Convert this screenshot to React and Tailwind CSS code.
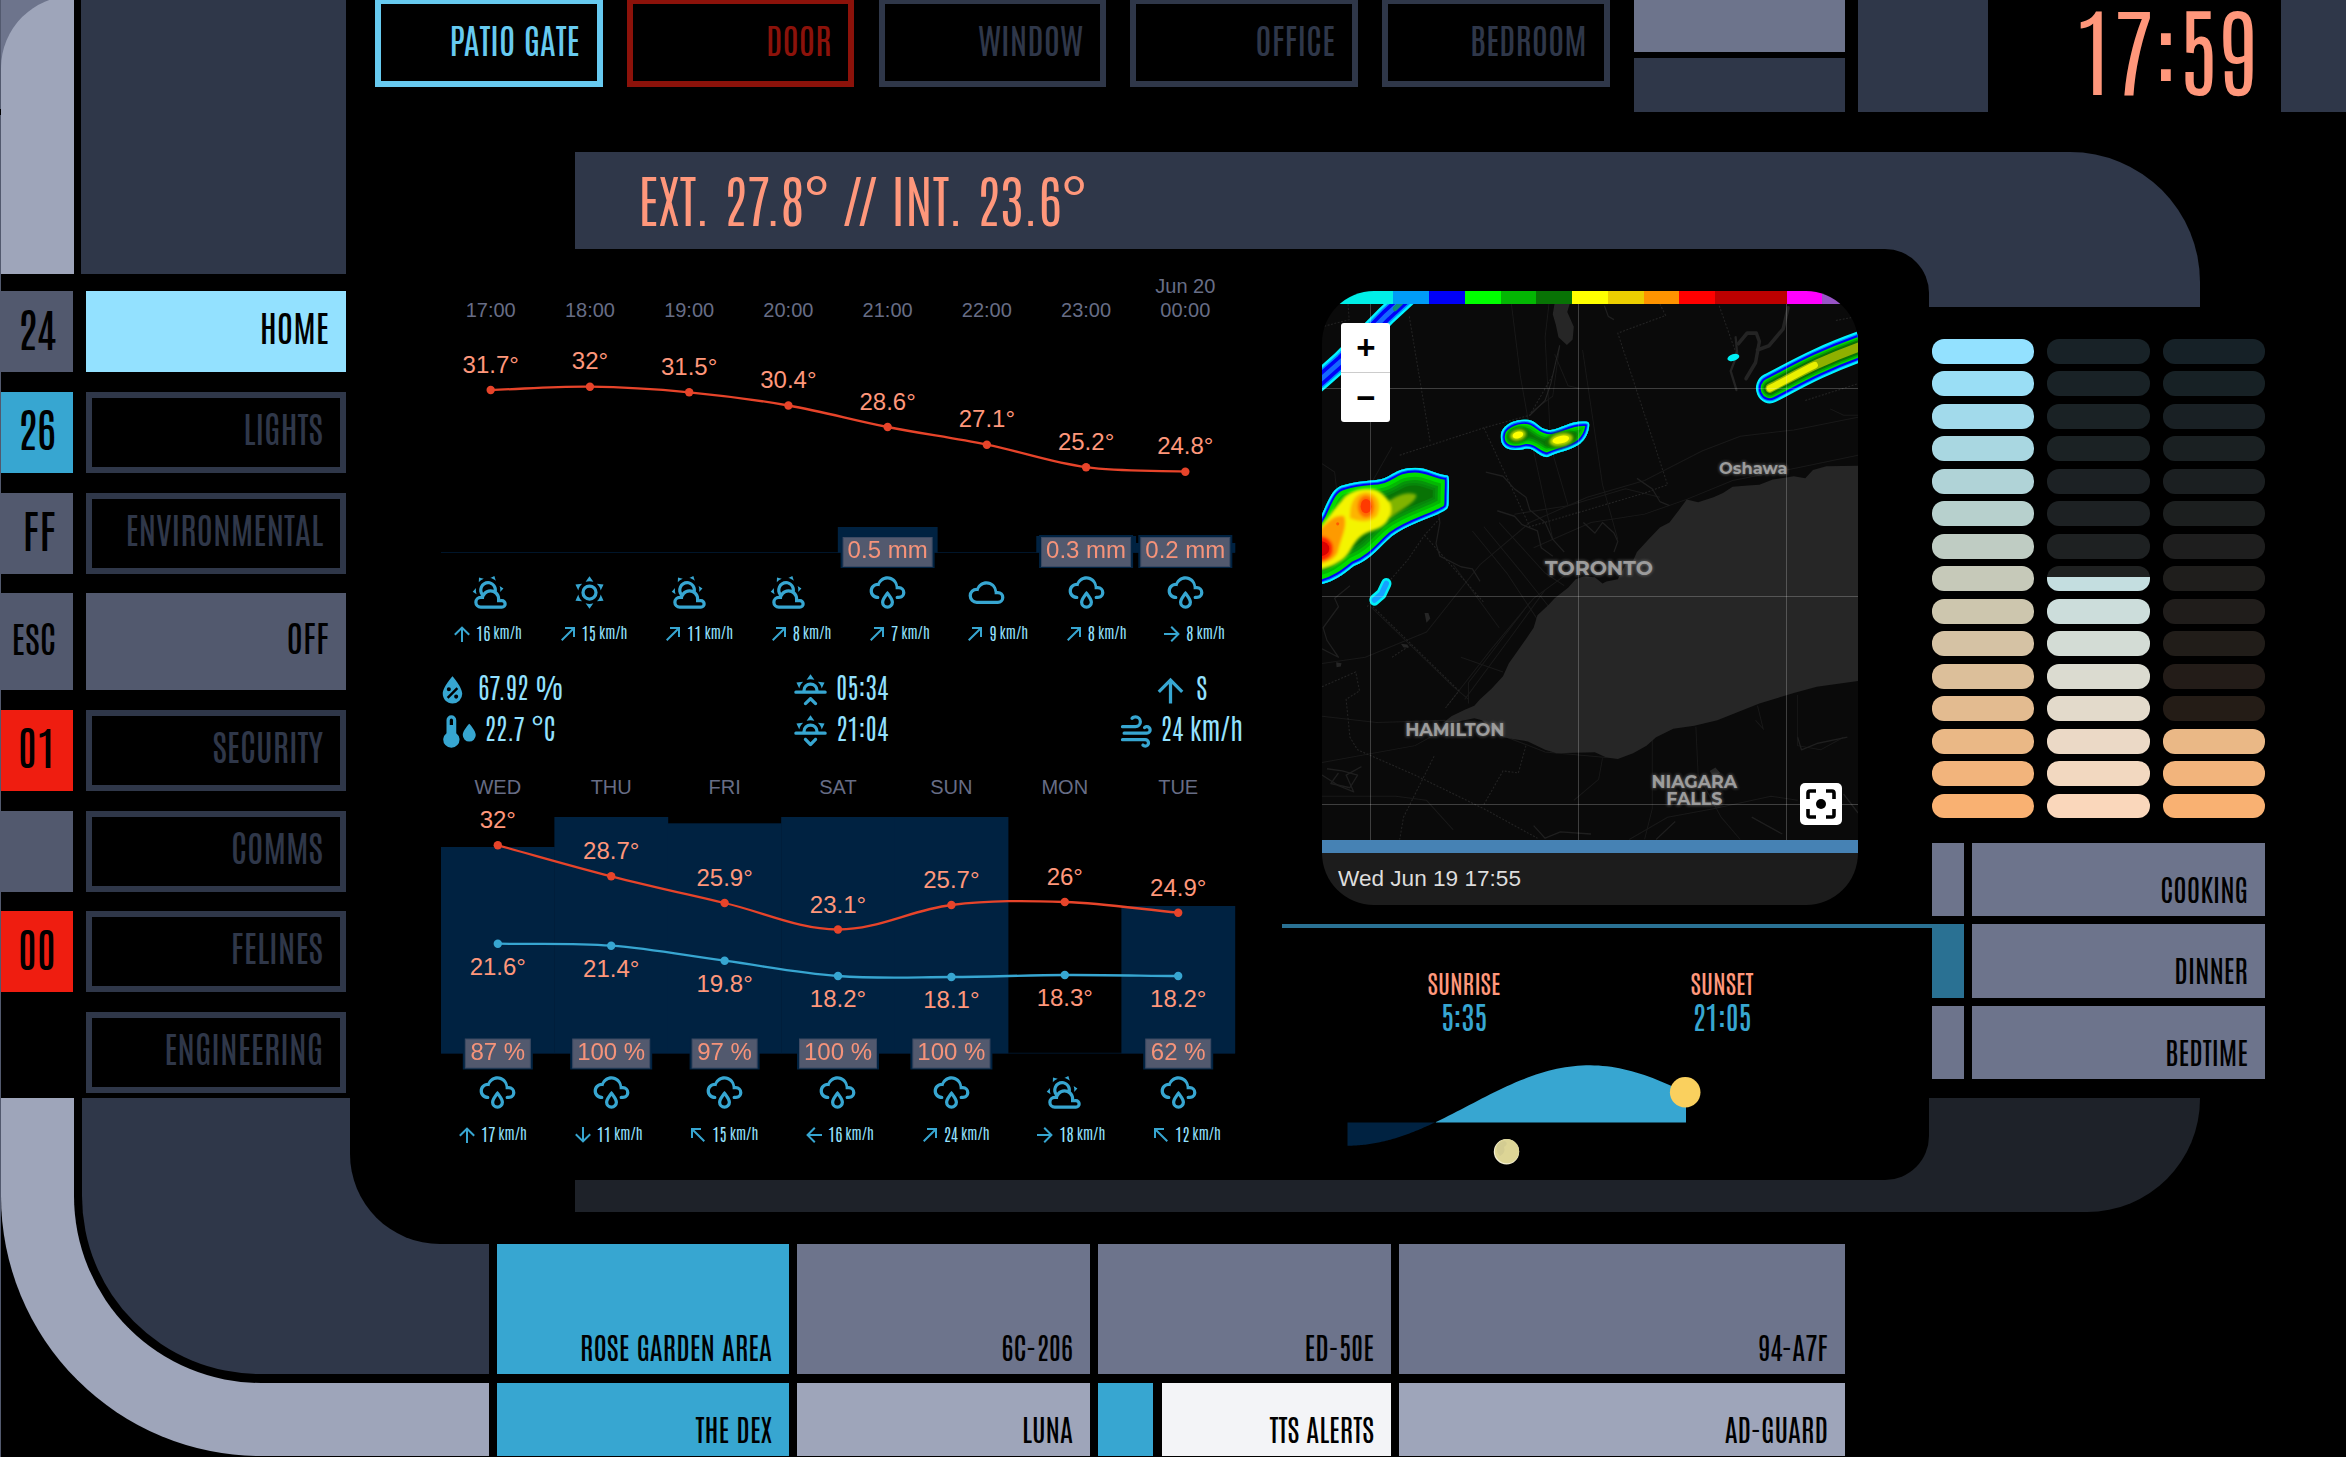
const LCARS = "font-[Antonio,'Roboto_Condensed',sans-serif]";
const CHART_FONT = "'Liberation Sans', Arial, sans-serif";

const ICONS = {
  partly:
    "M12.74,5.47C15.1,6.5 16.35,9.03 15.92,11.46C17.19,12.56 18,14.19 18,16V16.17C18.31,16.06 18.65,16 19,16A3,3 0 0,1 22,19A3,3 0 0,1 19,22H6A4,4 0 0,1 2,18A4,4 0 0,1 6,14H6.27C5,12.45 4.6,10.24 5.5,8.26C6.72,5.5 9.97,4.24 12.74,5.47M11.93,7.3C10.16,6.5 8.09,7.31 7.31,9.07C6.85,10.09 6.93,11.22 7.41,12.13C8.5,10.83 10.16,10 12,10C12.7,10 13.38,10.12 14,10.34C13.94,9.06 13.18,7.86 11.93,7.3M13.55,3.64C13,3.4 12.45,3.23 11.88,3.12L14.37,1.82L15.27,4.71C14.76,4.29 14.19,3.93 13.55,3.64M6.09,4.44C5.6,4.79 5.17,5.19 4.8,5.63L4.91,2.82L7.87,3.5C7.25,3.71 6.65,4.03 6.09,4.44M18,9.71C17.91,9.12 17.78,8.55 17.59,8L19.97,9.5L17.92,11.73C18.03,11.08 18.05,10.4 18,9.71M3.04,11.3C3.11,11.9 3.24,12.47 3.43,13L1.06,11.5L3.1,9.28C3,9.93 2.97,10.61 3.04,11.3M19,18H16V16A4,4 0 0,0 12,12A4,4 0 0,0 8,16H6A2,2 0 0,0 4,18A2,2 0 0,0 6,20H19A1,1 0 0,0 20,19A1,1 0 0,0 19,18Z",
  sunny:
    "M12,7A5,5 0 0,1 17,12A5,5 0 0,1 12,17A5,5 0 0,1 7,12A5,5 0 0,1 12,7M12,9A3,3 0 0,0 9,12A3,3 0 0,0 12,15A3,3 0 0,0 15,12A3,3 0 0,0 12,9M12,2L14.39,5.42C13.65,5.15 12.84,5 12,5C11.16,5 10.35,5.15 9.61,5.42L12,2M3.34,7L7.5,6.65C6.9,7.16 6.36,7.78 5.94,8.5C5.5,9.24 5.25,10 5.11,10.79L3.34,7M3.36,17L5.12,13.23C5.26,14 5.53,14.78 5.95,15.5C6.37,16.24 6.91,16.86 7.5,17.37L3.36,17M20.65,7L18.88,10.79C18.74,10 18.47,9.23 18.05,8.5C17.63,7.78 17.1,7.15 16.5,6.64L20.65,7M20.64,17L16.5,17.36C17.09,16.85 17.62,16.22 18.04,15.5C18.46,14.77 18.73,14 18.87,13.21L20.64,17M12,22L9.59,18.56C10.33,18.83 11.14,19 12,19C12.82,19 13.63,18.83 14.37,18.56L12,22Z",
  rainy:
    "M6,14.03A1,1 0 0,1 7,15.03C7,15.58 6.55,16.03 6,16.03C3.24,16.03 1,13.79 1,11.03C1,8.27 3.24,6.03 6,6.03C7,3.68 9.3,2.03 12,2.03C15.43,2.03 18.24,4.69 18.5,8.06L19,8.03A4,4 0 0,1 23,12.03C23,14.23 21.21,16.03 19,16.03H18C17.45,16.03 17,15.58 17,15.03C17,14.47 17.45,14.03 18,14.03H19A2,2 0 0,0 21,12.03A2,2 0 0,0 19,10.03H17V9.03C17,6.27 14.76,4.03 12,4.03C9.5,4.03 7.45,5.84 7.06,8.21C6.73,8.09 6.37,8.03 6,8.03A3,3 0 0,0 3,11.03A3,3 0 0,0 6,14.03M12,14.15C12.18,14.39 12.37,14.66 12.56,14.94C13,15.56 14,17.03 14,18C14,19.11 13.1,20 12,20A2,2 0 0,1 10,18C10,17.03 11,15.56 11.44,14.94C11.63,14.66 11.82,14.4 12,14.15M12,11.03L11.5,11.59C11.5,11.59 10.65,12.55 9.79,13.81C8.93,15.06 8,16.56 8,18A4,4 0 0,0 12,22A4,4 0 0,0 16,18C16,16.56 15.07,15.06 14.21,13.81C13.35,12.55 12.5,11.59 12.5,11.59",
  cloudy:
    "M6,19A5,5 0 0,1 1,14A5,5 0 0,1 6,9C7,6.65 9.3,5 12,5C15.43,5 18.24,7.66 18.5,11.03L19,11A4,4 0 0,1 23,15A4,4 0 0,1 19,19H6M19,13H17V12A5,5 0 0,0 12,7C9.5,7 7.45,8.82 7.06,11.19C6.73,11.07 6.37,11 6,11A3,3 0 0,0 3,14A3,3 0 0,0 6,17H19A2,2 0 0,0 21,15A2,2 0 0,0 19,13Z",
  humidity:
    "M12,3.25C12,3.25 6,10 6,14C6,17.32 8.69,20 12,20A6,6 0 0,0 18,14C18,10 12,3.25 12,3.25M14.47,9.97L15.53,11.03L9.53,17.03L8.47,15.97M9.75,10A1.25,1.25 0 0,1 11,11.25A1.25,1.25 0 0,1 9.75,12.5A1.25,1.25 0 0,1 8.5,11.25A1.25,1.25 0 0,1 9.75,10M14.25,14.5A1.25,1.25 0 0,1 15.5,15.75A1.25,1.25 0 0,1 14.25,17A1.25,1.25 0 0,1 13,15.75A1.25,1.25 0 0,1 14.25,14.5Z",
  dew:
    "M10,13V5A3,3 0 0,0 4,5V13A5,5 0 1,0 10,13M6,5A1,1 0 0,1 8,5V8H6V5M18,7.2C18,7.2 14,11.3 14,14.2A4,4 0 0,0 22,14.2C22,11.3 18,7.2 18,7.2Z",
  sunrise:
    "M3,12H7A5,5 0 0,1 12,7A5,5 0 0,1 17,12H21A1,1 0 0,1 22,13A1,1 0 0,1 21,14H3A1,1 0 0,1 2,13A1,1 0 0,1 3,12M15,12A3,3 0 0,0 12,9A3,3 0 0,0 9,12H15M12,2L14.39,5.42C13.65,5.15 12.84,5 12,5C11.16,5 10.35,5.15 9.61,5.42L12,2M3.34,7L7.5,6.65C6.9,7.16 6.36,7.78 5.94,8.5C5.5,9.24 5.25,10 5.11,10.79L3.34,7M20.65,7L18.88,10.79C18.74,10 18.47,9.23 18.05,8.5C17.63,7.78 17.1,7.15 16.5,6.64L20.65,7M12.71,16.3L15.82,19.41C16.21,19.8 16.21,20.43 15.82,20.82C15.43,21.21 14.8,21.21 14.41,20.82L12,18.41L9.59,20.82C9.2,21.21 8.57,21.21 8.18,20.82C7.79,20.43 7.79,19.8 8.18,19.41L11.29,16.3C11.5,16.1 11.74,16 12,16C12.26,16 12.5,16.1 12.71,16.3Z",
  sunset:
    "M3,12H7A5,5 0 0,1 12,7A5,5 0 0,1 17,12H21A1,1 0 0,1 22,13A1,1 0 0,1 21,14H3A1,1 0 0,1 2,13A1,1 0 0,1 3,12M15,12A3,3 0 0,0 12,9A3,3 0 0,0 9,12H15M12,2L14.39,5.42C13.65,5.15 12.84,5 12,5C11.16,5 10.35,5.15 9.61,5.42L12,2M3.34,7L7.5,6.65C6.9,7.16 6.36,7.78 5.94,8.5C5.5,9.24 5.25,10 5.11,10.79L3.34,7M20.65,7L18.88,10.79C18.74,10 18.47,9.23 18.05,8.5C17.63,7.78 17.1,7.15 16.5,6.64L20.65,7M12.71,20.71L15.82,17.6C16.21,17.21 16.21,16.57 15.82,16.18C15.43,15.79 14.8,15.79 14.41,16.18L12,18.59L9.59,16.18C9.2,15.79 8.57,15.79 8.18,16.18C7.79,16.57 7.79,17.21 8.18,17.6L11.29,20.71C11.5,20.9 11.74,21 12,21C12.26,21 12.5,20.9 12.71,20.71Z",
  windy:
    "M4,10A1,1 0 0,1 3,9A1,1 0 0,1 4,8H12A2,2 0 0,0 14,6A2,2 0 0,0 12,4C11.45,4 10.95,4.22 10.59,4.59C10.2,5 9.56,5 9.17,4.59C8.78,4.2 8.78,3.56 9.17,3.17C9.9,2.45 10.9,2 12,2A4,4 0 0,1 16,6A4,4 0 0,1 12,10H4M19,12A1,1 0 0,0 20,11A1,1 0 0,0 19,10C18.72,10 18.47,10.11 18.29,10.29C17.9,10.68 17.27,10.68 16.88,10.29C16.5,9.9 16.5,9.27 16.88,8.88C17.42,8.34 18.17,8 19,8A3,3 0 0,1 22,11A3,3 0 0,1 19,14H5A1,1 0 0,1 4,13A1,1 0 0,1 5,12H19M18,18H4A1,1 0 0,1 3,17A1,1 0 0,1 4,16H18A3,3 0 0,1 21,19A3,3 0 0,1 18,22C17.17,22 16.42,21.66 15.88,21.12C15.5,20.73 15.5,20.1 15.88,19.71C16.27,19.32 16.9,19.32 17.29,19.71C17.47,19.89 17.72,20 18,20A1,1 0 0,0 19,19A1,1 0 0,0 18,18Z",
  n: "M13,20H11V8L5.5,13.5L4.08,12.08L12,4.16L19.92,12.08L18.5,13.5L13,8V20Z",
  s: "M11,4H13V16L18.5,10.5L19.92,11.92L12,19.84L4.08,11.92L5.5,10.5L11,16V4Z",
  e: "M4,11V13H16L10.5,18.5L11.92,19.92L19.84,12L11.92,4.08L10.5,5.5L16,11H4Z",
  w: "M20,11V13H8L13.5,18.5L12.08,19.92L4.16,12L12.08,4.08L13.5,5.5L8,11H20Z",
  ne: "M5,17.59L15.59,7H9V5H19V15H17V8.41L6.41,19L5,17.59Z",
  nw: "M19,17.59L17.59,19L7,8.41V15H5V5H15V7H8.41L19,17.59Z",
};

function Icon({ name, className }) {
  return (
    <svg viewBox="0 0 24 24" className={`shrink-0 fill-[#37a6d1] ${className}`}>
      <path d={ICONS[name]} fillRule={name === "dew" || name === "humidity" ? "evenodd" : "nonzero"} />
    </svg>
  );
}

/* ---------- navigation ---------- */

const NAV = [
  { code: "24", codeCls: "bg-[#52596e]", label: "HOME", cls: "bg-[#93e1ff] text-black pr-[17px]" },
  { code: "26", codeCls: "bg-[#37a6d1]", label: "LIGHTS" },
  { code: "FF", codeCls: "bg-[#52596e]", label: "ENVIRONMENTAL" },
  { code: "ESC", small: true, tall: true, codeCls: "bg-[#52596e]", label: "OFF", cls: "bg-[#52596e] text-black pr-[17px]" },
  { code: "01", codeCls: "bg-[#ef1d10]", label: "SECURITY" },
  { code: "", codeCls: "bg-[#52596e]", label: "COMMS" },
  { code: "00", codeCls: "bg-[#ef1d10]", label: "FELINES" },
  { code: "", codeCls: "", label: "ENGINEERING" },
];

function Sidebar() {
  return (
    <nav className="col-start-2 row-start-1 flex flex-col">
      <div className="flex h-[274px] gap-[7px] overflow-hidden">
        <div className="w-[73px] bg-[#6d748c]">
          <div className="-mt-1 h-[278px] rounded-tl-[72px] bg-[#9ea5ba]" />
        </div>
        <div className="flex-1 bg-[#2f3749]" />
      </div>
      <div className="mt-[17.2px] flex flex-col gap-[19.6px]">
        {NAV.map((n) => (
          <div key={n.label} className={`flex gap-[13px] ${n.tall ? "h-[97px]" : "h-[81.1px]"}`}>
            <div
              className={`flex w-[72px] items-center justify-end pr-[17px] pb-2.5 text-black ${n.small ? "text-[36.5px]" : "text-[46px]"} leading-none ${n.codeCls}`}
            >
              {n.code}
            </div>
            <div
              className={`flex flex-1 items-center justify-end pb-[9px] text-[35.7px] leading-none ${n.cls || "border-[6px] border-[#2f3749] pr-[17px] text-[#2f3749]"}`}
            >
              {n.label}
            </div>
          </div>
        ))}
      </div>
    </nav>
  );
}

function LeftElbow() {
  return (
    <div className="col-span-2 col-start-2 row-span-2 row-start-2 h-[358px] overflow-hidden rounded-bl-[260px] border-b-[73px] border-l-[73px] border-[#9ea5ba]">
      <div className="ml-2 flex h-[276px] w-[407px] justify-end rounded-bl-[178px] bg-[#2f3749]">
        <div className="h-[146px] w-[139px] rounded-bl-[90px] bg-black" />
      </div>
    </div>
  );
}

/* ---------- top bar ---------- */

const SENSORS = [
  ["PATIO GATE", "border-[#67caf0] text-[#67caf0]"],
  ["DOOR", "border-[#8c120a] text-[#8c120a]"],
  ["WINDOW", "border-[#2f3749] text-[#2f3749]"],
  ["OFFICE", "border-[#2f3749] text-[#2f3749]"],
  ["BEDROOM", "border-[#2f3749] text-[#2f3749]"],
];

function TopBar() {
  return (
    <header className="flex h-[112px] pl-[29px]">
      <div className="-mt-0.5 flex gap-[24.2px]">
        {SENSORS.map(([name, cls]) => (
          <div
            key={name}
            className={`flex h-[89px] w-[227.6px] items-center justify-end border-[6px] pr-[17px] pb-[7px] text-[35.4px] leading-none ${cls}`}
          >
            {name}
          </div>
        ))}
      </div>
      <div className="ml-6 flex w-[211px] flex-col gap-1.5">
        <div className="h-[52px] bg-[#6d748c]" />
        <div className="h-[54px] bg-[#2f3749]" />
      </div>
      <div className="ml-[13px] w-[130px] bg-[#2f3749]" />
      <div className="flex flex-1 items-center justify-end pr-[23px] pb-[19px] text-[96.8px] leading-none font-light text-[#ff977b]">
        17:59
      </div>
      <div className="w-[65px] bg-[#2f3749]" />
    </header>
  );
}

/* ---------- weather charts ---------- */

function spline(pts, t = 0.35) {
  const cps = pts.map((p, i) => {
    const a = pts[Math.max(i - 1, 0)];
    const b = pts[Math.min(i + 1, pts.length - 1)];
    const d1 = Math.hypot(p[0] - a[0], p[1] - a[1]);
    const d2 = Math.hypot(b[0] - p[0], b[1] - p[1]);
    const s = d1 + d2 || 1;
    const fa = (t * d1) / s;
    const fb = (t * d2) / s;
    const dx = b[0] - a[0];
    const dy = b[1] - a[1];
    return [[p[0] - fa * dx, p[1] - fa * dy], [p[0] + fb * dx, p[1] + fb * dy]];
  });
  let d = `M${pts[0]}`;
  for (let i = 1; i < pts.length; i++) d += `C${cps[i - 1][1]} ${cps[i][0]} ${pts[i]}`;
  return d;
}

function Series({ pts, color }) {
  return (
    <g>
      <path d={spline(pts)} fill="none" stroke={color} strokeWidth="2.3" />
      {pts.map(([x, y]) => (
        <circle key={x} cx={x} cy={y} r="4.2" fill={color} />
      ))}
    </g>
  );
}

function RainTag({ x, y, w, children }) {
  return (
    <g>
      <rect x={x - w / 2} y={y} width={w} height="33" fill="#002241" />
      <rect x={x - w / 2 + 2.5} y={y + 2.5} width={w - 5} height="29" fill="#52596e" stroke="#3d4a63" />
      <text x={x} y={y + 23} textAnchor="middle" fontSize="24" fill="#ff977b" opacity="0.95">
        {children}
      </text>
    </g>
  );
}

const HOURS = [
  ["17:00", "31.7°", 390, "partly", "n", 16],
  ["18:00", "32°", 386.7, "sunny", "ne", 15],
  ["19:00", "31.5°", 392.3, "partly", "ne", 11],
  ["20:00", "30.4°", 405.5, "partly", "ne", 8],
  ["21:00", "28.6°", 427, "rainy", "ne", 7, "0.5 mm", 527],
  ["22:00", "27.1°", 444.7, "cloudy", "ne", 9],
  ["23:00", "25.2°", 467.2, "rainy", "ne", 8, "0.3 mm", 536],
  ["00:00", "24.8°", 471.7, "rainy", "e", 8, "0.2 mm", 543],
];
const hx = (i) => 490.7 + i * 99.23;

function HourlyChart() {
  return (
    <svg viewBox="441 270 794 302" className="mt-[21px] block h-[302px] w-[794px] overflow-visible" fontFamily={CHART_FONT}>
      <rect x="441" y="552" width="794" height="1" fill="#00152a" />
      {HOURS.map((h, i) => h[7] && <rect key={i} x={hx(i) - 49.8} y={h[7]} width="99.8" height={552.7 - h[7]} fill="#002241" />)}
      <Series pts={HOURS.map((h, i) => [hx(i), h[2]])} color="#e7442a" />
      <text x={hx(7)} y="292.7" textAnchor="middle" fontSize="20" fill="#676d86">
        Jun 20
      </text>
      {HOURS.map((h, i) => (
        <g key={i} textAnchor="middle">
          <text x={hx(i)} y="317" fontSize="20" fill="#676d86">
            {h[0]}
          </text>
          <text x={hx(i)} y={h[2] - 17.3} fontSize="24" fill="#ff977b">
            {h[1]}
          </text>
          {h[6] && (
            <RainTag x={hx(i)} y={535} w={94}>
              {h[6]}
            </RainTag>
          )}
        </g>
      ))}
    </svg>
  );
}

const DAYS = [
  ["WED", "32°", 845.3, "21.6°", 943.7, "rainy", "n", 17, "87 %", 847],
  ["THU", "28.7°", 876.3, "21.4°", 945.7, "rainy", "s", 11, "100 %", 817],
  ["FRI", "25.9°", 903, "19.8°", 960.7, "rainy", "nw", 15, "97 %", 823.3],
  ["SAT", "23.1°", 929.5, "18.2°", 976, "rainy", "w", 16, "100 %", 817],
  ["SUN", "25.7°", 905, "18.1°", 977, "rainy", "ne", 24, "100 %", 817],
  ["MON", "26°", 902, "18.3°", 975, "partly", "e", 18],
  ["TUE", "24.9°", 912.7, "18.2°", 976, "rainy", "nw", 12, "62 %", 906],
];
const dx = (i) => 497.8 + i * 113.4;

function DailyChart() {
  return (
    <svg viewBox="441 770 794 302" className="block h-[302px] w-[794px] overflow-visible" fontFamily={CHART_FONT}>
      <rect x="441" y="1052.7" width="794" height="1" fill="#00152a" />
      {DAYS.map((d, i) => d[9] && <rect key={i} x={dx(i) - 56.8} y={d[9]} width="113.8" height={1053.4 - d[9]} fill="#002241" />)}
      <Series pts={DAYS.map((d, i) => [dx(i), d[4]])} color="#37a6d1" />
      <Series pts={DAYS.map((d, i) => [dx(i), d[2]])} color="#e7442a" />
      {DAYS.map((d, i) => (
        <g key={i} textAnchor="middle">
          <text x={dx(i)} y="794" fontSize="20" fill="#676d86">
            {d[0]}
          </text>
          <text x={dx(i)} y={d[2] - 17} fontSize="24" fill="#ff977b">
            {d[1]}
          </text>
          <text x={dx(i)} y={d[4] + 31.2} fontSize="24" fill="#ff977b">
            {d[3]}
          </text>
          {d[8] && (
            <RainTag x={dx(i)} y={1036.5} w={d[8].length > 4 ? 82 : 70}>
              {d[8]}
            </RainTag>
          )}
        </g>
      ))}
    </svg>
  );
}

function IconRow({ names }) {
  return (
    <div className="mt-px flex h-[38px]">
      {names.map((n, i) => (
        <div key={i} className="flex flex-1 justify-center">
          <Icon name={n} className="size-[39px]" />
        </div>
      ))}
    </div>
  );
}

function WindRow({ items, className }) {
  return (
    <div className={`flex h-6 items-center justify-between ${className}`}>
      {items.map(([dir, speed], i) => (
        <div key={i} className="flex items-center text-[#93e1ff]">
          <Icon name={dir} className="size-6" />
          <span className="-mt-[2px] ml-0.5 text-[17.4px] leading-none font-light">{speed}</span>
          <span className="-mt-[3px] ml-[3px] text-[14.8px] leading-none font-light">km/h</span>
        </div>
      ))}
    </div>
  );
}

function Fact({ icon, children, className = "" }) {
  return (
    <div className={`flex h-[41px] items-center justify-center gap-1.5 text-[27.6px] leading-none font-light text-[#93e1ff] ${className}`}>
      <Icon name={icon} className="size-[39px]" />
      <span className="pb-[7px]">{children}</span>
    </div>
  );
}

function Weather() {
  return (
    <section className="ml-[95px] w-[794px] shrink-0">
      <HourlyChart />
      <IconRow names={HOURS.map((h) => h[3])} />
      <WindRow className="mt-[11px] mr-[10px] ml-[9px]" items={HOURS.map((h) => [h[4], h[5]])} />
      <div className="mt-6 -mr-2 -ml-2 flex justify-between">
        <div className="flex flex-col items-start">
          <Fact icon="humidity">67.92 %</Fact>
          <Fact icon="dew" className="ml-[6.5px]">22.7 °C</Fact>
        </div>
        <div>
          <Fact icon="sunrise">05:34</Fact>
          <Fact icon="sunset">21:04</Fact>
        </div>
        <div>
          <Fact icon="n">S</Fact>
          <Fact icon="windy">24 km/h</Fact>
        </div>
      </div>
      <div className="mt-[18px]">
        <DailyChart />
      </div>
      <IconRow names={DAYS.map((d) => d[5])} />
      <WindRow className="mt-3 mr-[14px] ml-[14px]" items={DAYS.map((d) => [d[6], d[7]])} />
    </section>
  );
}

/* ---------- radar map ---------- */

const SCALE = [
  "bg-[#00efe7]", "bg-[#00efe7]", "bg-[#009cf7]", "bg-[#0000f7]", "bg-[#00ff00]", "bg-[#03b703]", "bg-[#087305]",
  "bg-[#ffff00]", "bg-[#ecce00]", "bg-[#fe9300]", "bg-[#ff0000]", "bg-[#bd0000]", "bg-[#bd0000]", "bg-[#ff00fe]", "bg-[#9854c6]",
];

const LAKE =
  "M1470,465L1375,466L1340,475L1320,495L1290,490L1235,498L1200,510L1170,512L1130,515L1105,530L1080,540L1040,552L1010,545L990,570L965,600L940,612L910,640L880,670L870,690L850,700L830,735L800,740L790,745L770,730L740,728L720,735L700,755L665,780L650,795L620,820L610,850L580,890L545,935L530,965L500,995L470,1020L455,1035L430,1045L395,1060L375,1075L410,1073L455,1065L475,1070L500,1090L530,1110L560,1115L595,1120L640,1140L670,1148L770,1146L800,1158L830,1162L870,1148L905,1130L930,1110L975,1090L1030,1083L1090,1070L1200,1030L1290,1005L1350,990L1470,975Z";

const ROADS = [
  "M552,81L575,250L610,430L660,640", "M650,81L640,160L655,420L700,560", "M738,190L790,510L830,640", "M600,340L660,300L678,180",
  "M665,200L700,275L728,281", "M57,935L170,920L330,860L470,700L600,600L750,540L900,500L1050,430L1150,395L1290,380L1458,350",
  "M380,1040L500,900L610,780L700,720", "M430,1020L560,860L640,760", "M450,620L540,720L620,830", "M480,610L580,720L650,800",
  "M520,600L640,720L690,750", "M400,700L520,850", "M560,580L700,560L850,520L940,540", "M610,660L760,600L900,580L1010,545L1130,500L1300,470L1458,440",
  "M240,420L190,500L184,560", "M184,800L400,990L440,1020", "M57,1060L200,1075L380,1070", "M540,1110L640,1145L800,1158",
  "M57,1170L300,1130L380,1090", "M920,1110L920,1280L900,1353", "M1034,1085L1040,1200L1100,1300L1150,1353",
  "M860,1353L960,1300L1080,1280L1230,1250L1300,1260", "M1300,1010L1300,1130L1360,1140L1420,1110", "M1195,1035L1210,1090L1190,1070",
  "M790,1160L780,1210L715,1260", "M57,460L90,480L95,520", "M57,1250L250,1250L330,1260L400,1330", "M1385,330L1420,345L1458,345",
  "M420,920L530,955", "M440,1030L440,980L600,790",
];
const RIVERS = [
  "M485,480L530,490L560,520L590,540L600,570L640,600L660,640L690,670", "M515,572L560,585L580,605L620,620L630,660L660,680",
  "M360,570L365,600L355,650L365,680L420,705L450,710L470,740", "M880,495L920,520L940,550L965,560", "M740,600L770,625L790,600L820,625L830,645L820,670",
  "M57,900L100,920L70,880L60,850L100,800L90,780L130,750", "M70,1185L110,1190L150,1200L130,1230L80,1220L100,1195", "M57,1200L100,1225L140,1240L120,1200L160,1180",
  "M610,1320L640,1350L680,1335L760,1340", "M980,1310L930,1353", "M1180,1300L1220,1320L1260,1340", "M1300,1110L1310,1140L1350,1125L1430,1110",
  "M1420,1245L1458,1290", "M795,85L805,110L820,118",
];
const BORDERS = [
  "M125,81L128,118L57,135", "M285,110L340,410", "M260,440L480,375L600,345L660,250", "M480,375L600,610L900,530L960,510L830,150L955,108L940,81",
  "M1095,85L1140,200", "M365,590L325,630L280,690L175,800", "M325,630L480,790", "M190,800L415,1000L380,1040", "M57,990L145,955L155,1000L120,1020L130,1110L150,1140L300,1200L480,1280L620,1350",
  "M240,920L290,890", "M350,1155L270,1300L260,1353", "M480,1270L530,1190L570,1195L590,1130", "M1320,310L1458,270", "M1400,120L1458,110",
];

const RAIN_BIG =
  "M20,640L57,580C75,545 85,516 115,511C140,504 160,502 185,500C240,500 240,470 300,470C335,470 352,486 384,488C392,488 388,520 388,545C388,566 386,568 370,575C340,590 280,605 240,632C210,655 185,688 140,703C110,725 90,738 57,746L20,755Z";
const RAIN_MID =
  "M524,397C524,365 565,355 590,355C622,357 622,380 655,380C685,376 705,358 745,360C757,361 757,365 754,378C750,395 742,404 732,412C710,428 672,432 645,445C618,440 612,422 590,424C560,432 524,430 524,397Z";

/* Radar cell: concentric intensity bands running inward from the outline. */
function Cell({ id, d, bands, core, children }) {
  return (
    <g>
      <clipPath id={id}>
        <path d={d} />
      </clipPath>
      <g clipPath={`url(#${id})`}>
        <path d={d} fill={core} />
        {bands.map(([c, w], i) => (
          <path key={i} d={d} fill="none" stroke={c} strokeWidth={w} strokeLinejoin="round" />
        ))}
        {children}
      </g>
    </g>
  );
}

function Streak({ d, bands }) {
  return bands.map(([c, w], i) => (
    <path key={i} d={d} fill="none" stroke={c} strokeWidth={w} strokeLinecap="round" strokeLinejoin="round" />
  ));
}

const LABELS = [
  ["TORONTO", 277, 271, 20.4],
  ["Oshawa", 431.3, 169.7, 16.3],
  ["HAMILTON", 132.8, 432, 17.6],
  ["NIAGARA", 372.3, 483.7, 17.4],
  ["FALLS", 372.3, 501.4, 17.4],
];

function MapCanvas() {
  return (
    <svg viewBox="0 0 536 536" className="block h-[536px] w-[536px] bg-[#0a0a0a]">
      <defs>
        <filter id="soft" x="-30%" y="-30%" width="160%" height="160%">
          <feGaussianBlur stdDeviation="4" />
        </filter>
        <filter id="halo" x="-20%" y="-50%" width="140%" height="200%">
          <feGaussianBlur stdDeviation="1.4" />
        </filter>
      </defs>
      <g transform="translate(-21.8,-34) scale(.38265,.42091)">
        <g fill="none" strokeWidth="2.4" stroke="#191919">
          {ROADS.map((d) => <path key={d} d={d} />)}
        </g>
        <g fill="none" strokeWidth="3.2" stroke="#1f1f1f" strokeLinejoin="round">
          {RIVERS.map((d) => <path key={d} d={d} />)}
        </g>
        <g fill="none" strokeWidth="2.6" stroke="#242424" strokeDasharray="5 4">
          {BORDERS.map((d) => <path key={d} d={d} />)}
        </g>
        <g fill="#262626">
          <path d={LAKE} />
          <path d="M665,78L705,78L698,100L715,135L712,165L697,178L675,160L668,130L660,105Z" />
          <path d="M263,888L280,890L284,897L270,897ZM94,932L108,934L106,942L95,944ZM325,815L335,815L340,828L330,838ZM1070,1190L1085,1182L1098,1195L1080,1204Z" />
        </g>
        <g fill="none" stroke="#242424" strokeLinecap="round" strokeLinejoin="round">
          <path d="M1138,160L1142,200L1125,240L1140,285" strokeWidth="6" />
          <path d="M1145,175L1168,150L1192,150L1200,170L1190,220L1165,258" strokeWidth="9" />
          <path d="M1195,190L1225,180L1262,140L1275,90" strokeWidth="9" />
          <path d="M600,345L640,310L655,270L670,210L678,180" strokeWidth="3" />
        </g>

        <Streak
          d="M30,278L57,257L107,217L225,108L300,45"
          bands={[["#00f5ff", 50], ["#0090ff", 38], ["#0000f7", 30], ["#1468ff", 12]]}
        />
        <Streak d="M248,92L300,45" bands={[["#0a8f7a", 12]]} />
        <Streak
          d="M1227,281C1290,252 1350,218 1475,178"
          bands={[["#00f5ff", 72], ["#008cff", 62], ["#0000f7", 57], ["#00dd00", 47], ["#04a804", 40], ["#087305", 32], ["#8fb000", 22]]}
        />
        <Streak d="M1227,281C1260,268 1310,240 1345,226" bands={[["#eaf000", 16]]} />
        <Cell
          id="cellMid"
          d={RAIN_MID}
          core="#087305"
          bands={[["#07800a", 58], ["#05a005", 48], ["#03c803", 38], ["#00e400", 28], ["#0000f7", 21], ["#0074ff", 13], ["#00f5ff", 8]]}
        >
          <g filter="url(#soft)">
            <ellipse cx="569" cy="392" rx="29" ry="19" fill="#087305" transform="rotate(-12 569 392)" />
            <ellipse cx="682" cy="403" rx="44" ry="19" fill="#087305" transform="rotate(-12 682 403)" />
          </g>
        </Cell>
        <g filter="url(#soft)">
          <ellipse cx="569" cy="392" rx="21" ry="13" fill="#b8d400" transform="rotate(-12 569 392)" />
          <ellipse cx="682" cy="403" rx="31" ry="15" fill="#b8d400" transform="rotate(-10 682 403)" />
        </g>
        <ellipse cx="569" cy="392" rx="14" ry="8" fill="#ffff00" transform="rotate(-12 569 392)" />
        <ellipse cx="681" cy="403" rx="22" ry="9" fill="#ffff00" transform="rotate(-10 681 403)" />
        <Cell
          id="cellBig"
          d={RAIN_BIG}
          core="#087305"
          bands={[["#07850a", 84], ["#06940a", 72], ["#03b703", 58], ["#00dd00", 42], ["#0000f7", 22], ["#0074ff", 13], ["#00f5ff", 8]]}
        />
        <g filter="url(#soft)">
          <path d="M220,560C250,530 290,525 304,535C300,555 260,570 235,590Z" fill="#80b400" />
          <path d="M20,720L20,640C60,610 80,575 108,548C125,520 190,510 212,530C235,550 245,560 232,590C218,618 180,618 160,632C135,650 135,668 115,685C90,703 70,708 20,720Z" fill="#f4f400" />
          <path d="M130,590C128,545 150,528 175,528C205,532 215,560 200,585C180,600 160,600 130,590Z" fill="#fdb400" />
          <path d="M20,700L40,625C70,605 85,578 115,585C125,610 105,640 98,672C85,692 60,700 20,700Z" fill="#fe9a00" />
          <ellipse cx="172" cy="562" rx="22" ry="26" fill="#ff6a00" />
          <ellipse cx="52" cy="662" rx="34" ry="30" fill="#ff2000" />
        </g>
        <ellipse cx="172" cy="561" rx="14" ry="17" fill="#ff3a00" />
        <ellipse cx="52" cy="662" rx="24" ry="18" fill="#d80000" />
        <circle cx="98" cy="603" r="4" fill="#ff5a00" />
        <Streak d="M194,784L212,770L225,745" bands={[["#00f0f5", 27], ["#16a0ff", 14]]} />
        <ellipse cx="1132" cy="208" rx="16" ry="8" fill="#00f0f5" transform="rotate(-15 1132 208)" />
      </g>
      <g stroke="#ffffff" strokeOpacity="0.22" strokeWidth="1">
        <path d="M48.5,0V536M256.5,0V536M464.5,0V536M0,84.5H536M0,292.5H536M0,500.5H536" />
      </g>
      <g textAnchor="middle" fontFamily="Montserrat, Inter, sans-serif" fontWeight="700">
        {LABELS.map(([t, x, y, s]) => (
          <g key={t} fontSize={s}>
            <text x={x} y={y} fill="#9a9a9a" stroke="#8a8a8a" strokeWidth="1.5" opacity="0.5" filter="url(#halo)" aria-hidden="true">
              {t}
            </text>
            <text x={x} y={y} fill="#9c9c9c">
              {t}
            </text>
          </g>
        ))}
      </g>
    </svg>
  );
}

function Radar() {
  return (
    <div className="relative mt-[42px] ml-10 h-[614px] w-[536px] overflow-hidden rounded-[52px] font-['Liberation_Sans',Arial,sans-serif]">
      <div className="flex h-[13px]">
        {SCALE.map((c, i) => (
          <div key={i} className={`flex-1 ${c}`} />
        ))}
      </div>
      <MapCanvas />
      <div className="h-[13px] bg-[#4682b4]" />
      <div className="flex h-[52px] items-center bg-[#1c1c1c] pl-4 text-[22.6px] leading-none text-[#dddddd]">
        Wed Jun 19 17:55
      </div>
      <div className="absolute top-8 left-[19px] w-[49px] rounded-[3px] bg-white pl-px text-center font-['Liberation_Mono',monospace] text-[33px] font-bold text-black">
        <div className="-ml-px h-[50px] border-b border-[#cccccc] pl-px leading-[55px]">+</div>
        <div className="h-[49px] leading-[56px]">−</div>
      </div>
      <div className="absolute right-[16px] bottom-[80px] flex size-[42px] items-center justify-center rounded-[5px] bg-white">
        <svg viewBox="0 0 30 30" className="size-[30px]" fill="none" stroke="#000" strokeWidth="3.6">
          <path d="M2,10V4Q2,2 4,2H10M20,2H26Q28,2 28,4V10M28,20V26Q28,28 26,28H20M10,28H4Q2,28 2,26V20" />
          <circle cx="15" cy="15" r="5" fill="#000" stroke="none" />
        </svg>
      </div>
    </div>
  );
}

/* ---------- sun card ---------- */

const sunY = (x) => 1105.5 + 40.2 * Math.cos(((x - 1347.5) / 242) * Math.PI);
function sunArea(from, to) {
  let d = `M${from},1122.5`;
  for (let i = 0; i <= 60; i++) {
    const x = from + ((to - from) * i) / 60;
    d += `L${x.toFixed(2)},${sunY(x).toFixed(2)}`;
  }
  return `${d}L${to},1122.5Z`;
}

function SunCard() {
  return (
    <div className="w-[647px]">
      <div className="flex pt-[42px] text-center leading-none">
        <div className="ml-[111px] w-[142px]">
          <div className="text-[25.7px] text-[#ff977b]">SUNRISE</div>
          <div className="mt-1 text-[31px] text-[#37a6d1]">5:35</div>
        </div>
        <div className="ml-[116px] w-[142px]">
          <div className="text-[25.7px] text-[#ff977b]">SUNSET</div>
          <div className="mt-1 text-[31px] text-[#37a6d1]">21:05</div>
        </div>
      </div>
      <svg viewBox="1340 1060 370 110" className="mt-[29px] ml-[58px] block h-[110px] w-[370px]">
        <path d={sunArea(1347.5, 1436)} fill="#002241" />
        <path d={sunArea(1436, 1686)} fill="#37a6d1" />
        <circle cx="1685.2" cy="1092.3" r="15.3" fill="#fad05e" />
        <circle cx="1506.5" cy="1151.7" r="12.7" fill="#f3efd2" />
        <circle cx="1507" cy="1151.2" r="12.1" fill="#ddd596" />
        <path d="M1497,1146q3,-5 8,-5q4,3 -1,6q2,6 -4,9q-4,-4 -3,-10Z" fill="#d3cc92" />
      </svg>
    </div>
  );
}

/* ---------- right rail ---------- */

const mix = (a, b, t) => `rgb(${a.map((v, i) => Math.round(v + (b[i] - v) * t)).join(",")})`;
const METERS = [
  { lit: 0, fill: (i) => mix([147, 225, 255], [249, 177, 114], i / 14) },
  {
    lit: 8,
    fill: (i) => mix([196, 222, 224], [250, 215, 187], (i - 7) / 7),
    dim: (i) => mix([24, 34, 39], [31, 33, 33], i / 7),
  },
  {
    lit: 12,
    fill: (i) => mix([147, 225, 255], [249, 177, 114], i / 14),
    dim: (i) => mix([22, 33, 39], [36, 28, 22], i / 11),
  },
];

const SCENES = [
  ["COOKING", "bg-[#6d748c]"],
  ["DINNER", "bg-[#2a7193]"],
  ["BEDTIME", "bg-[#6d748c]"],
];

function Rail() {
  return (
    <aside className="col-span-2 col-start-3 row-start-3 pt-8 pl-[3px]">
      <div className="grid h-[480px] grid-cols-3 gap-[13px]">
        {METERS.map((m, c) => (
          <div key={c} className="flex flex-col gap-[7.8px]">
            {Array.from({ length: 15 }, (_, i) => (
              <div key={i} className="h-[24.7px] overflow-hidden rounded-[12px]" style={{ background: i >= m.lit ? m.fill(i) : m.dim(i) }}>
                {c === 1 && i === 7 && <div className="mt-[11px] h-[14px]" style={{ background: m.fill(7) }} />}
              </div>
            ))}
          </div>
        ))}
      </div>
      <div className="mt-6 flex flex-col gap-2">
        {SCENES.map(([name, tab]) => (
          <div key={name} className="flex h-[73.3px] gap-2">
            <div className={`w-8 ${tab}`} />
            <div className="flex flex-1 items-end justify-end bg-[#6d748c] pr-[17px] pb-[13px] text-[29.2px] leading-none text-black">
              {name}
            </div>
          </div>
        ))}
      </div>
    </aside>
  );
}

/* ---------- bottom bar ---------- */

function Tile({ className, children }) {
  return (
    <div className={`flex items-end justify-end pr-[17px] pb-[13px] text-[29.2px] leading-none text-black ${className}`}>
      {children}
    </div>
  );
}

function BottomBar() {
  return (
    <footer className="col-start-4 row-start-3 ml-2 grid h-[212px] w-[1348px] grid-cols-[292px_293px_293px_446px] grid-rows-[130px_73px] gap-x-2 gap-y-[9px]">
      <Tile className="bg-[#37a6d1]">ROSE GARDEN AREA</Tile>
      <Tile className="bg-[#6d748c]">6C-206</Tile>
      <Tile className="bg-[#6d748c]">ED-50E</Tile>
      <Tile className="bg-[#6d748c]">94-A7F</Tile>
      <Tile className="bg-[#37a6d1]">THE DEX</Tile>
      <Tile className="bg-[#9ea5ba]">LUNA</Tile>
      <div className="flex gap-[9px]">
        <div className="w-[55px] bg-[#37a6d1]" />
        <Tile className="flex-1 bg-[#f3f4f7]">TTS ALERTS</Tile>
      </div>
      <Tile className="bg-[#9ea5ba]">AD-GUARD</Tile>
    </footer>
  );
}

/* ---------- page ---------- */

export default function App() {
  return (
    <div
      className={`grid h-[1457px] w-[2346px] grid-cols-[1px_345px_143px_1857px] grid-rows-[1098px_146px_213px] overflow-hidden bg-black whitespace-nowrap ${LCARS}`}
    >
      <div className="col-start-1 row-span-3 row-start-1 flex flex-col gap-1.5">
        <div className="h-[109px] bg-[#52596e]" />
        <div className="flex-1 bg-[#52596e]" />
      </div>
      <Sidebar />
      <LeftElbow />
      <main className="z-10 col-span-2 col-start-3 row-span-2 row-start-1">
        <TopBar />
        <div className="mt-10 grid grid-cols-[229px_1354px_271px_65px] grid-rows-[97px_58px_791px_82px_32px]">
          <div className="col-span-2 col-start-2 row-span-2 row-start-1 rounded-tr-[130px] bg-[#2f3749]">
            <div className="flex h-[97px] items-center pb-1.5 pl-[63px] text-[57px] leading-none font-light text-[#ff977b]">
              EXT. 27.8° // INT. 23.6°
            </div>
            <div className="h-[58px] w-[1354px] rounded-tr-[44px] bg-black" />
          </div>
          <div className="col-span-2 col-start-2 row-span-2 row-start-4 rounded-br-[113px] bg-[#1e2229]">
            <div className="h-[82px] w-[1354px] rounded-br-[44px] bg-black" />
          </div>
          <div className="col-span-2 col-start-1 row-span-3 row-start-2 flex">
            <Weather />
            <section className="ml-[47px] w-[647px]">
              <Radar />
              <div className="mt-[19px] h-1 w-[650px] bg-[#2a7193]" />
              <SunCard />
            </section>
          </div>
          <Rail />
        </div>
      </main>
      <BottomBar />
    </div>
  );
}
